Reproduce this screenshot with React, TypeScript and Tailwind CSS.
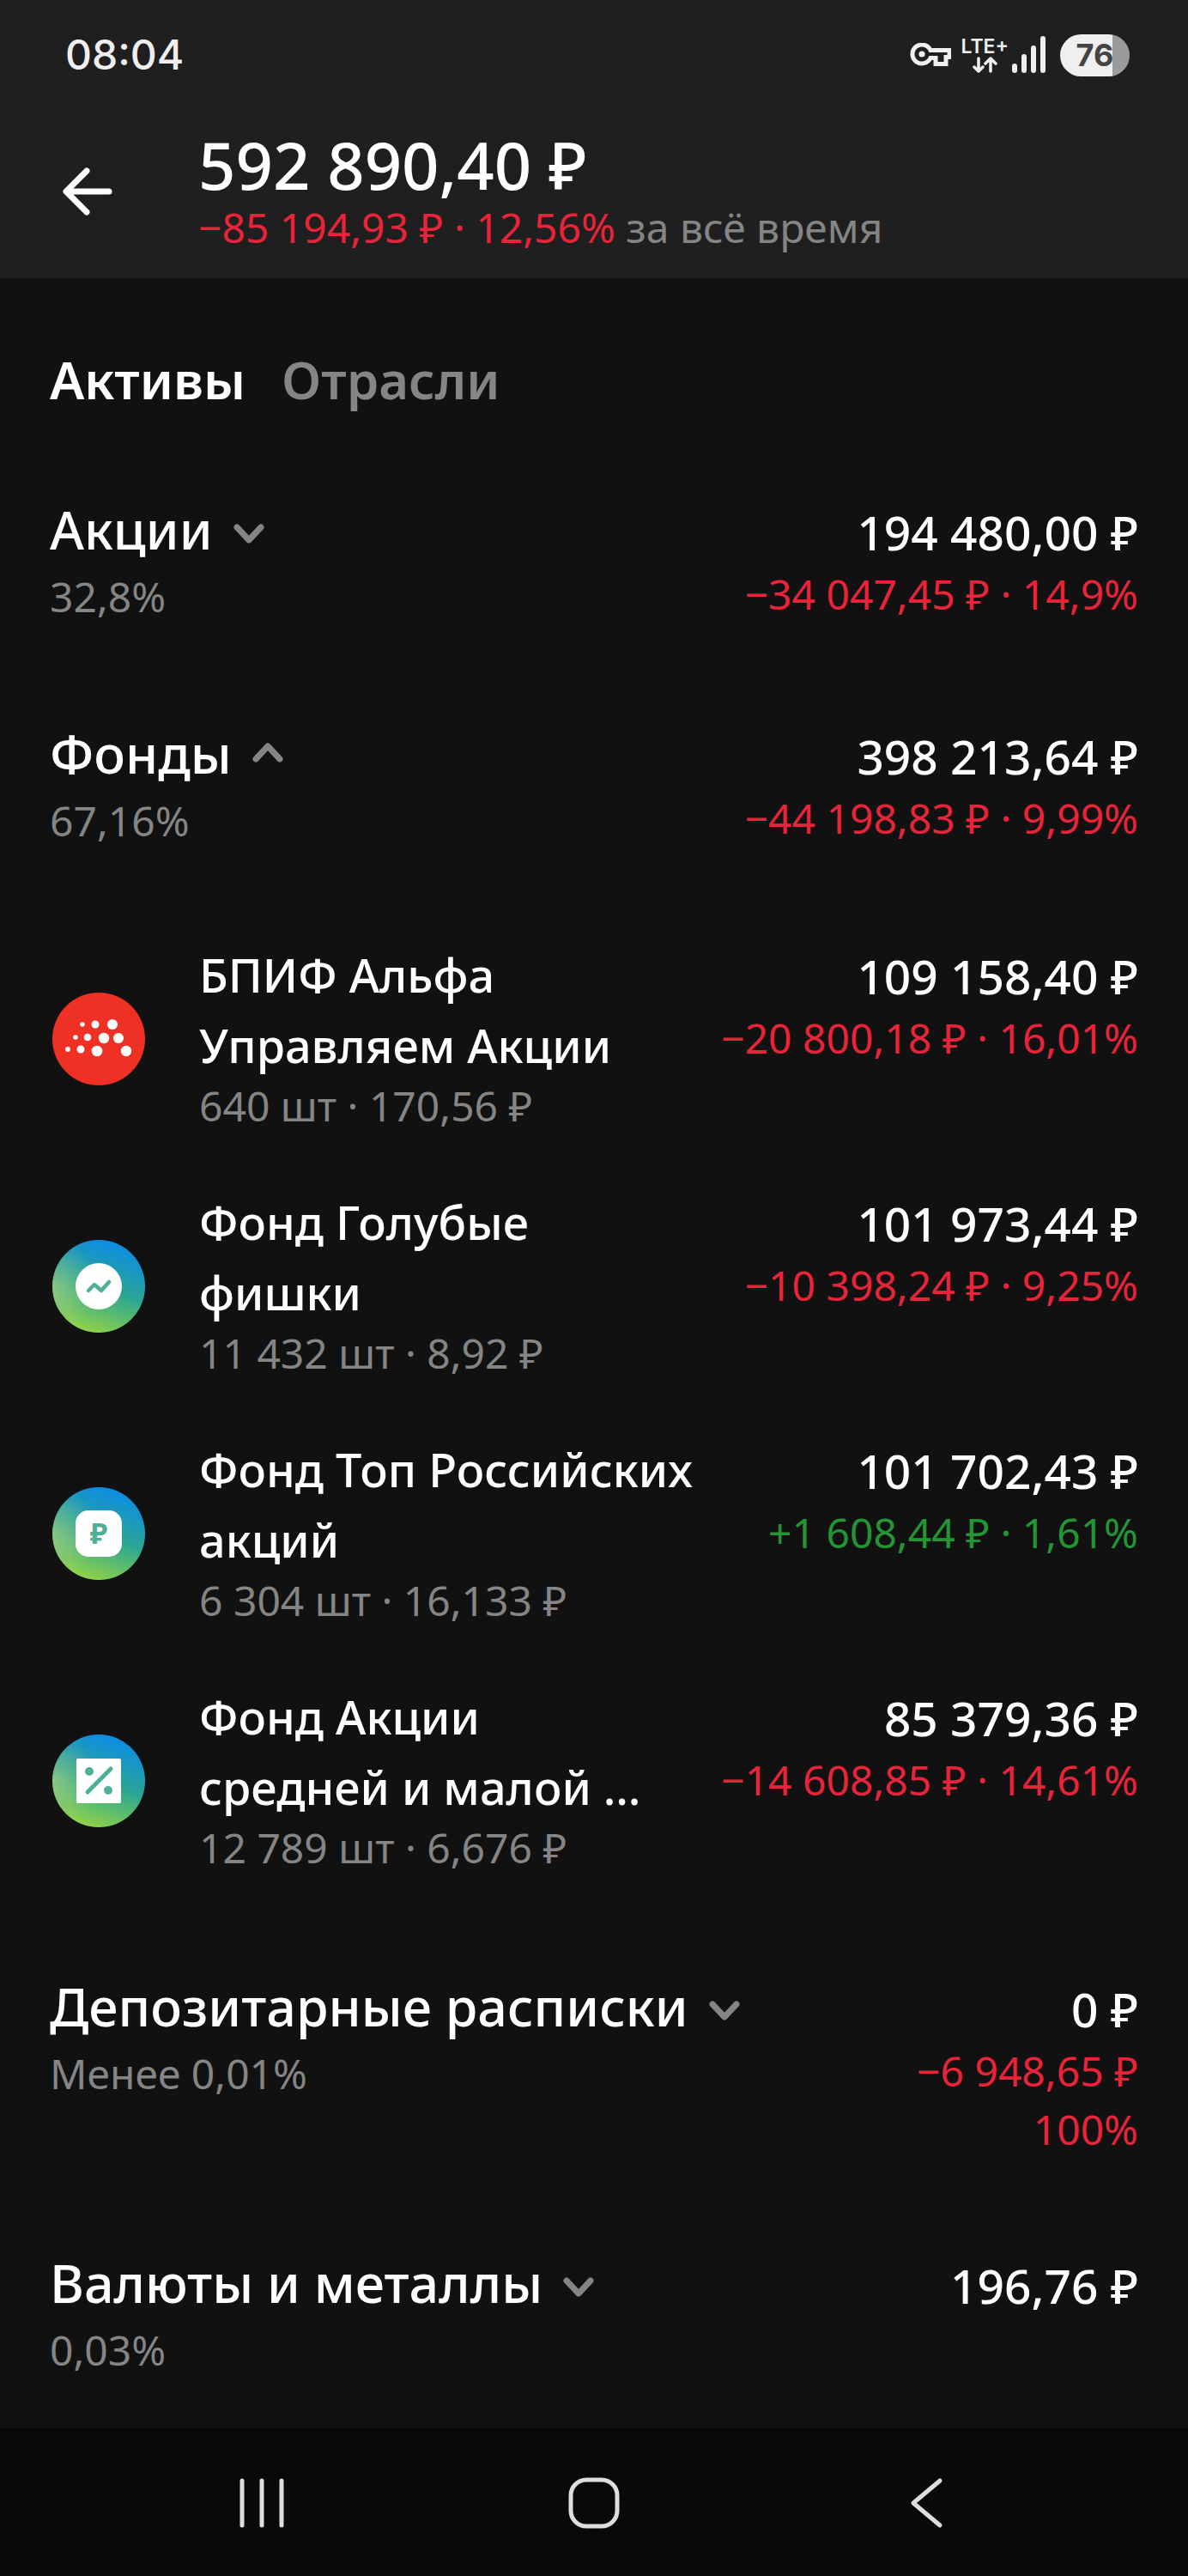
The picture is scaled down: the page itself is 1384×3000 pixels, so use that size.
import React from "react";
import clsx from "clsx";

type Change = {
  text: string[];
  up?: boolean;
};

type Group = {
  name: string;
  share: string;
  amount: string;
  change?: Change;
  funds?: Fund[];
};

type Fund = {
  name: string;
  details: string;
  amount: string;
  change: Change;
  logo: React.ReactNode;
};

const groups: Group[] = [
  {
    name: "Акции",
    share: "32,8%",
    amount: "194 480,00 ₽",
    change: { text: ["−34 047,45 ₽ · 14,9%"] },
  },
  {
    name: "Фонды",
    share: "67,16%",
    amount: "398 213,64 ₽",
    change: { text: ["−44 198,83 ₽ · 9,99%"] },
    funds: [
      {
        name: "БПИФ Альфа Управляем Акции",
        details: "640 шт · 170,56 ₽",
        amount: "109 158,40 ₽",
        change: { text: ["−20 800,18 ₽ · 16,01%"] },
        logo: <DotsLogo />,
      },
      {
        name: "Фонд Голубые фишки",
        details: "11 432 шт · 8,92 ₽",
        amount: "101 973,44 ₽",
        change: { text: ["−10 398,24 ₽ · 9,25%"] },
        logo: (
          <GradientLogo id="chips">
            <circle cx="54" cy="54" r="27" fill="#fff" />
            <path
              d="M42 59l7-7 8 7 9-10"
              fill="none"
              stroke="#4fb09a"
              strokeWidth="4.5"
              strokeLinecap="round"
              strokeLinejoin="round"
            />
          </GradientLogo>
        ),
      },
      {
        name: "Фонд Топ Российских акций",
        details: "6 304 шт · 16,133 ₽",
        amount: "101 702,43 ₽",
        change: { text: ["+1 608,44 ₽ · 1,61%"], up: true },
        logo: (
          <GradientLogo id="top">
            <rect x="27" y="27" width="54" height="54" rx="15" fill="#fff" />
            <text
              x="54"
              y="66"
              textAnchor="middle"
              fontSize="34"
              fontWeight="700"
              fill="#4fb09a"
            >
              ₽
            </text>
          </GradientLogo>
        ),
      },
      {
        name: "Фонд Акции средней\u00a0и малой\u00a0…",
        details: "12 789 шт · 6,676 ₽",
        amount: "85 379,36 ₽",
        change: { text: ["−14 608,85 ₽ · 14,61%"] },
        logo: (
          <GradientLogo id="mid">
            <rect x="28" y="28" width="52" height="52" rx="2" fill="#fff" />
            <circle cx="43" cy="43" r="5" fill="#4fb09a" />
            <circle cx="65" cy="65" r="5" fill="#4fb09a" />
            <path
              d="M41 67l27-27"
              stroke="#4fb09a"
              strokeWidth="5"
              strokeLinecap="round"
            />
          </GradientLogo>
        ),
      },
    ],
  },
  {
    name: "Депозитарные расписки",
    share: "Менее 0,01%",
    amount: "0 ₽",
    change: { text: ["−6 948,65 ₽", "100%"] },
  },
  {
    name: "Валюты и металлы",
    share: "0,03%",
    amount: "196,76 ₽",
  },
];

function DotsLogo() {
  return (
    <svg className="size-[108px]" viewBox="0 0 108 108" aria-hidden="true">
      <circle cx="54" cy="54" r="54" fill="#ee3124" />
      <g fill="#fff">
        <circle cx="35" cy="37" r="2.7" />
        <circle cx="50" cy="37" r="4.5" />
        <circle cx="70" cy="37" r="6" />
        <circle cx="27" cy="52" r="2.7" />
        <circle cx="41" cy="52" r="4.3" />
        <circle cx="60" cy="53" r="6.2" />
        <circle cx="77" cy="53" r="6" />
        <circle cx="18" cy="66" r="2.9" />
        <circle cx="33" cy="66" r="4.5" />
        <circle cx="52" cy="68" r="6.3" />
        <circle cx="86" cy="68" r="6.2" />
      </g>
    </svg>
  );
}

function GradientLogo({
  id,
  children,
}: {
  id: string;
  children: React.ReactNode;
}) {
  return (
    <svg className="size-[108px]" viewBox="0 0 108 108" aria-hidden="true">
      <defs>
        <linearGradient id={`${id}-base`} x1="0.65" y1="0" x2="0.32" y2="1">
          <stop offset="0.04" stopColor="#0e8ee0" />
          <stop offset="0.5" stopColor="#2aa594" />
          <stop offset="0.95" stopColor="#8bd04c" />
        </linearGradient>
        <radialGradient id={`${id}-light`} cx="0" cy="0.5" r="0.5">
          <stop offset="0" stopColor="#a8cf86" stopOpacity="0.65" />
          <stop offset="1" stopColor="#a8cf86" stopOpacity="0" />
        </radialGradient>
      </defs>
      <circle cx="54" cy="54" r="54" fill={`url(#${id}-base)`} />
      <circle cx="54" cy="54" r="54" fill={`url(#${id}-light)`} />
      {children}
    </svg>
  );
}

function Chevron({ open }: { open?: boolean }) {
  return (
    <svg
      className="size-12 text-[#858585]"
      viewBox="0 0 48 48"
      fill="none"
      stroke="currentColor"
      strokeWidth="7"
      strokeLinecap="round"
      strokeLinejoin="round"
      aria-hidden="true"
    >
      <path d={open ? "M10 30l14-15 14 15" : "M10 21l14 15 14-15"} />
    </svg>
  );
}

function StatusBar() {
  return (
    <div className="flex h-32 items-center justify-between pr-[68px] pl-[76px] font-['Inter',sans-serif] text-[#efefef]">
      <time className="text-[48px] leading-[60px] font-medium">08:04</time>
      <div className="flex items-center">
        <svg
          className="h-[28px] w-[48px]"
          viewBox="0 0 48 28"
          fill="none"
          stroke="currentColor"
          aria-hidden="true"
        >
          <path
            d="M24 8.500h22v8h-4v8h-12v-7h-6a11 11 0 1 1 0-9z"
            strokeWidth="5"
          />
          <circle cx="14" cy="13" r="3.600" fill="currentColor" stroke="none" />
        </svg>
        <div className="ml-3 flex flex-col items-center">
          <span className="text-[23px] leading-6 font-semibold">LTE+</span>
          <svg
            className="h-5 w-[30px]"
            viewBox="0 0 30 20"
            fill="none"
            stroke="currentColor"
            strokeWidth="3.500"
            strokeLinecap="round"
            strokeLinejoin="round"
            aria-hidden="true"
          >
            <path d="M8 2v15M3 12l5 5 5-5M22 17V3M16 8l6-6 6 6" />
          </svg>
        </div>
        <svg
          className="ml-1 h-11 w-[40px]"
          viewBox="0 0 40 44"
          fill="currentColor"
          aria-hidden="true"
        >
          <rect x="0" y="32" width="6" height="11" rx="3" />
          <rect x="11" y="21" width="6" height="22" rx="3" />
          <rect x="22" y="11" width="6" height="32" rx="3" />
          <rect x="33" y="0" width="6" height="43" rx="3" />
        </svg>
        <div className="ml-4 flex h-[49px] w-[81px] items-center justify-center rounded-full bg-linear-to-r from-[#efefef] from-75% to-[#9b9b9b] to-75% text-[36px] leading-[48px] font-bold text-[#444444]">
          76
        </div>
      </div>
    </div>
  );
}

function Amounts({ amount, change }: { amount: string; change?: Change }) {
  return (
    <div className="pt-[5px] text-right whitespace-nowrap">
      <p className="text-[55px] leading-[76px] font-medium">{amount}</p>
      {change?.text.map((line) => (
        <p
          key={line}
          className={clsx(
            "text-[48px] leading-[68px]",
            change.up ? "text-[#239534]" : "text-[#e9243a]",
          )}
        >
          {line}
        </p>
      ))}
    </div>
  );
}

function FundRow({ fund }: { fund: Fund }) {
  return (
    <li className="grid grid-cols-[174px_1fr_512px]">
      <div className="flex items-center pt-2 pl-[3px]">{fund.logo}</div>
      <div>
        <h3 className="text-[54px] leading-[82px] font-medium">{fund.name}</h3>
        <p className="text-[48px] leading-[60px] text-[#858585]">
          {fund.details}
        </p>
      </div>
      <Amounts amount={fund.amount} change={fund.change} />
    </li>
  );
}

function GroupSection({ group }: { group: Group }) {
  return (
    <section>
      <div className="flex justify-between">
        <div>
          <button
            type="button"
            aria-expanded={!!group.funds}
            className="flex items-center gap-[18px] text-[61px] leading-[80px] font-medium"
          >
            {group.name}
            <Chevron open={!!group.funds} />
          </button>
          <p className="text-[48px] leading-[76px] text-[#858585]">
            {group.share}
          </p>
        </div>
        <Amounts amount={group.amount} change={group.change} />
      </div>
      {group.funds && (
        <ul className="mt-[100px] mb-[10px] flex flex-col gap-16">
          {group.funds.map((fund) => (
            <FundRow key={fund.name} fund={fund} />
          ))}
        </ul>
      )}
    </section>
  );
}

export default function App() {
  return (
    <div className="flex min-h-screen flex-col bg-[#111111] font-['Noto_Sans',sans-serif] text-white">
      <header className="bg-[#1f1f1f] pb-7">
        <StatusBar />
        <div className="flex items-center pt-[22px] pl-[70px]">
          <button type="button" aria-label="Назад" className="w-[161px]">
            <svg
              className="size-16"
              viewBox="0 0 64 64"
              fill="none"
              stroke="currentColor"
              strokeWidth="7"
              strokeLinecap="round"
              strokeLinejoin="round"
              aria-hidden="true"
            >
              <path d="M57 32H8M31 8L7 32l24 24" />
            </svg>
          </button>
          <div>
            <h1 className="text-[76px] leading-[84px] font-medium">
              592 890,40 ₽
            </h1>
            <p className="text-[48px] leading-[62px] text-[#858585]">
              <span className="text-[#e9243a]">−85 194,93 ₽ · 12,56%</span> за
              всё время
            </p>
          </div>
        </div>
      </header>

      <main className="flex-1 px-[58px] pt-[78px] pb-[53px]">
        <div className="flex gap-[42px] text-[60px] leading-[80px] font-semibold">
          <button type="button">Активы</button>
          <button type="button" className="text-[#858585]">
            Отрасли
          </button>
        </div>
        <div className="mt-[95px] flex flex-col gap-[105px]">
          {groups.map((group) => (
            <GroupSection key={group.name} group={group} />
          ))}
        </div>
      </main>

      <nav className="grid h-[173px] grid-cols-3 items-center bg-[#090909] px-28 text-[#dedede]">
        <button type="button" aria-label="Недавние" className="flex justify-center">
          <svg
            className="size-16"
            viewBox="0 0 64 64"
            stroke="currentColor"
            strokeWidth="5"
            strokeLinecap="round"
            aria-hidden="true"
          >
            <path d="M9 6v52M32 6v52M55 6v52" />
          </svg>
        </button>
        <button type="button" aria-label="Домой" className="flex justify-center">
          <svg
            className="size-16"
            viewBox="0 0 64 64"
            fill="none"
            stroke="currentColor"
            strokeWidth="5"
            aria-hidden="true"
          >
            <rect x="5" y="5" width="54" height="54" rx="18" />
          </svg>
        </button>
        <button type="button" aria-label="Назад" className="flex justify-center">
          <svg
            className="size-16"
            viewBox="0 0 64 64"
            fill="none"
            stroke="currentColor"
            strokeWidth="5"
            strokeLinecap="round"
            strokeLinejoin="round"
            aria-hidden="true"
          >
            <path d="M48 6L17 32l31 26" />
          </svg>
        </button>
      </nav>
    </div>
  );
}
